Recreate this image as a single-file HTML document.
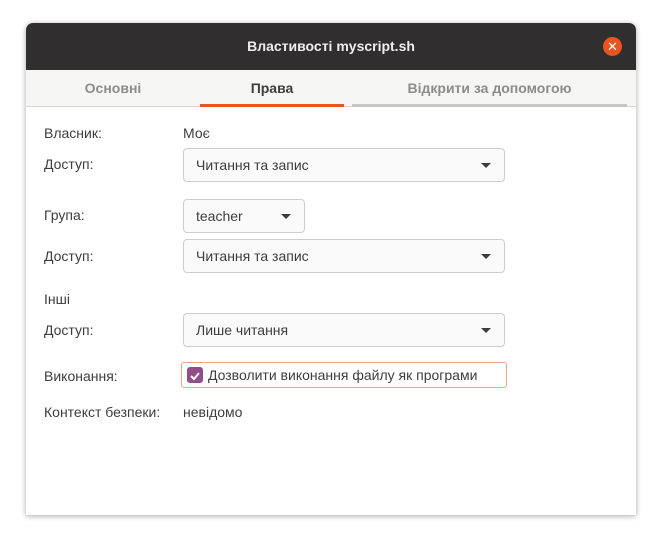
<!DOCTYPE html><html><head><meta charset="utf-8"><style>
body{margin:0;width:662px;height:544px;background:#fff;font-family:"Liberation Sans","DejaVu Sans",sans-serif;position:relative;overflow:hidden}
.win{position:absolute;left:26px;top:23px;width:610px;height:492px;background:#fff;border-radius:7px 7px 0 0;box-shadow:0 1px 6px rgba(0,0,0,.35);overflow:hidden}
.tb{position:absolute;left:0;top:0;width:610px;height:47px;background:#302e2e;color:#eee;font-weight:bold;font-size:14px;text-align:center;line-height:47px}
.x{position:absolute;left:577px;top:14px;width:19px;height:19px;border-radius:50%;background:#e9541f;color:#fff;font-size:13px;line-height:19px;font-weight:normal}
.tabs{position:absolute;top:47px;left:0;width:610px;height:36px;background:#f6f6f5;border-bottom:1px solid #d6d6d4}
.t{position:absolute;top:0;height:36px;line-height:36px;font-weight:bold;font-size:14px;color:#8c8c8c;text-align:center}
.t.a{color:#3d3d3d}
.ul{position:absolute;top:81px;height:3px}
.l{position:absolute;left:18px;font-size:14px;color:#3d3d3d}
.dd{position:absolute;left:157px;width:320px;height:32px;border:1px solid #cdcdcb;border-radius:4px;background:#fafafa;font-size:14px;color:#3d3d3d;line-height:32px;padding-left:12px;box-sizing:content-box}
.dd:after{content:"";position:absolute;right:13px;top:14px;border-left:5px solid transparent;border-right:5px solid transparent;border-top:5px solid #3d3d3d}
</style></head><body><div class="win">
<div class="tb">Властивості myscript.sh<div class="x">✕</div></div>
<div class="tabs">
<div class="t" style="left:0;width:174px">Основні</div>
<div class="t a" style="left:174px;width:144px">Права</div>
<div class="t" style="left:326px;width:275px">Відкрити за допомогою</div>
</div>
<div class="ul" style="left:174px;width:144px;background:#e9541f"></div>
<div class="ul" style="left:326px;width:275px;background:#c6c6c6"></div>
<div class="l" style="top:102px">Власник:</div><div class="l" style="left:157px;top:102px">Моє</div>
<div class="l" style="top:133px">Доступ:</div><div class="dd" style="top:125px;width:308px">Читання та запис</div>
<div class="l" style="top:184px">Група:</div><div class="dd" style="top:176px;width:108px">teacher</div>
<div class="l" style="top:225px">Доступ:</div><div class="dd" style="top:216px;width:308px">Читання та запис</div>
<div class="l" style="top:268px">Інші</div>
<div class="l" style="top:299px">Доступ:</div><div class="dd" style="top:290px;width:308px">Лише читання</div>
<div class="l" style="top:345px">Виконання:</div>
<div style="position:absolute;left:155px;top:339px;width:324px;height:24px;border:1px solid #f0a58a;border-radius:3px;font-size:14px;color:#3d3d3d;line-height:24px">
<span style="position:absolute;left:5px;top:4px;width:16px;height:16px;background:#924d8b;border-radius:3px"><svg width="16" height="16"><path d="M4 8l3 3 5-6" stroke="#fff" stroke-width="2" fill="none"/></svg></span>
<span style="position:absolute;left:26px">Дозволити виконання файлу як програми</span></div>
<div class="l" style="top:381px">Контекст безпеки:</div><div class="l" style="left:157px;top:381px">невідомо</div>
</div></body></html>
